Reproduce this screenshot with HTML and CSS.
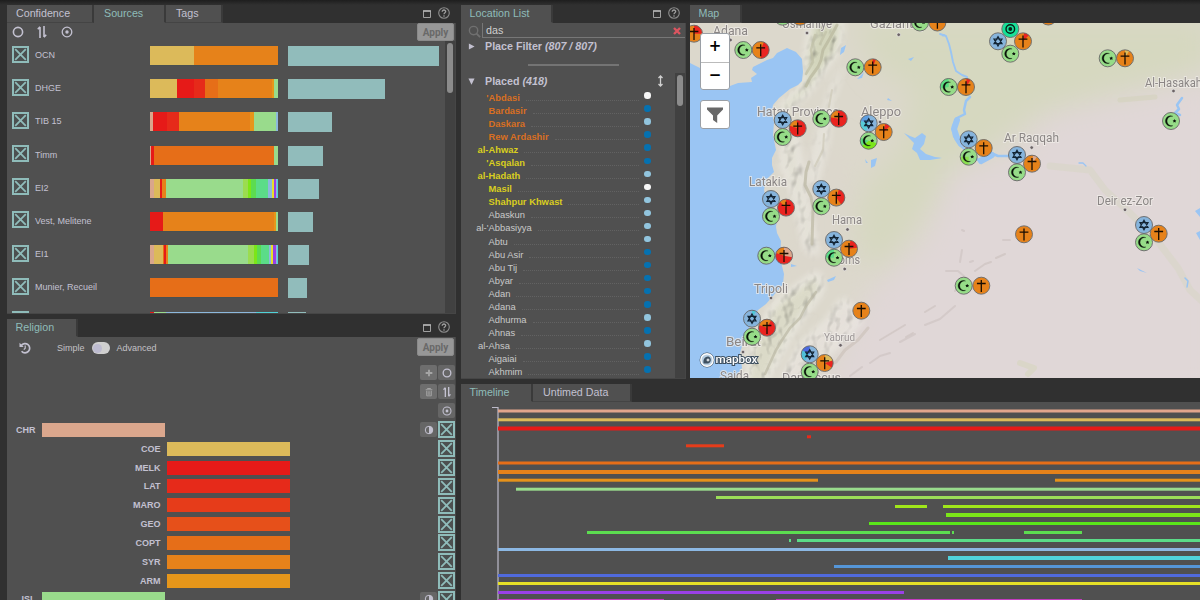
FILE: index.html
```html
<!DOCTYPE html>
<html lang="en">
<head>
<meta charset="utf-8">
<title>Places and religions</title>
<link rel="stylesheet" href="styles.css">
</head>
<body>
<svg class="defs" width="0" height="0" aria-hidden="true">
  <defs>
    <symbol id="i-check" viewBox="0 0 17 17"><rect x="1" y="1" width="15" height="15" fill="#4c5050" stroke="#8fbcba" stroke-width="2"/><path d="M3.200 3.200l10.600 10.600M13.800 3.200l-10.600 10.600" stroke="#8fbcba" stroke-width="1.800"/></symbol>
    <symbol id="i-circle" viewBox="0 0 12 12"><circle cx="6" cy="6" r="4.6" fill="none" stroke="currentColor" stroke-width="1.6"/></symbol>
    <symbol id="i-target" viewBox="0 0 12 12"><circle cx="6" cy="6" r="4.8" fill="none" stroke="currentColor" stroke-width="1.3"/><circle cx="6" cy="6" r="1.7" fill="currentColor"/></symbol>
    <symbol id="i-sort" viewBox="0 0 12 12"><path d="M4 12V1M1.8 3.2L4 .8M8 0v11M10.2 8.8L8 11.2" fill="none" stroke="currentColor" stroke-width="1.6"/></symbol>
    <symbol id="i-max" viewBox="0 0 8 8"><path d="M.5 1h7v6.500h-7z" fill="#303030" stroke="#a0a0a0"/><path d="M0 1h8" stroke="#b4b4b4" stroke-width="1.500"/></symbol>
    <symbol id="i-help" viewBox="0 0 12 12"><circle cx="6" cy="6" r="5.300" fill="none" stroke="#8c8c8c" stroke-width="1.100"/><path d="M4.200 4.700C4.200 2.400 7.800 2.500 7.700 4.600C7.700 5.800 6 5.700 6 7.200" fill="none" stroke="#a0a0a0" stroke-width="1.300"/><circle cx="6" cy="9" r=".8" fill="#a0a0a0"/></symbol>
    <symbol id="m-moon" viewBox="-9 -9 18 18"><path d="M1.800 -4.700A5.200 5.200 0 1 0 1.800 4.700A4.800 4.800 0 1 1 1.800 -4.700Z" fill="#0b130b" stroke="#0b130b" stroke-width=".3"/><path d="M3.500 -1.900L4.100 -.7L5.400 -.6L4.500 .3L4.800 1.600L3.500 1L2.300 1.600L2.500 .3L1.600 -.6L2.900 -.7Z" fill="#0b130b"/></symbol>
    <symbol id="m-cross" viewBox="-9 -9 18 18"><path d="M0 -5.800V6.200M-4.400 -2.200H4.400" fill="none" stroke="#180d02" stroke-width="1.300"/></symbol>
    <symbol id="m-star" viewBox="-9 -9 18 18"><path d="M0 -4.700L4 2.300H-4ZM0 4.700L4 -2.300H-4Z" fill="none" stroke="#122434" stroke-width="1.200"/></symbol>
    <symbol id="m-target" viewBox="-9 -9 18 18"><circle r="4.300" fill="none" stroke="#042417" stroke-width="1.400"/><circle r="1.900" fill="#042417"/></symbol>
  </defs>
</svg>
<div class="app">
  <div class="left">
    <section class="panel sources">
      <header class="tabbar">
        <span class="tab w-conf">Confidence</span><span class="tab active w-src">Sources</span><span class="tab w-tags">Tags</span>
        <span class="tools"><svg class="max"><use href="#i-max"/></svg><svg class="help"><use href="#i-help"/></svg></span>
      </header>
      <div class="body">
        <div class="toolbar">
          <svg class="ico"><use href="#i-circle"/></svg><svg class="ico"><use href="#i-sort"/></svg><svg class="ico"><use href="#i-target"/></svg>
          <button class="apply">Apply</button>
        </div>
        <div class="scroller">
          <div class="source-list" id="sources"></div>
          <div class="track"><div class="thumb tall"></div></div>
        </div>
      </div>
    </section>
    <section class="panel religion">
      <header class="tabbar">
        <span class="tab active w-rel">Religion</span>
        <span class="tools"><svg class="max"><use href="#i-max"/></svg><svg class="help"><use href="#i-help"/></svg></span>
      </header>
      <div class="body">
        <div class="rel-top">
          <svg class="history" viewBox="0 0 12 12"><path d="M2.300 3.600A4.600 4.600 0 1 1 2.600 9.200" fill="none" stroke="#c3c1d0" stroke-width="1.700"/><path d="M.5 .8V5H4.700Z" fill="#c3c1d0"/><path d="M6.200 3.500V6.300L4.800 7.600" fill="none" stroke="#c3c1d0" stroke-width="1.200"/></svg>
          <span class="lbl">Simple</span><span class="switch"></span><span class="lbl">Advanced</span>
          <button class="apply">Apply</button>
        </div>
        <div class="rel-tools">
          <div class="pair"><span class="btn dim"><svg viewBox="0 0 12 12"><path d="M6 2v8M2 6h8" stroke="#a5a5a5" stroke-width="2.200"/></svg></span><span class="btn"><svg><use href="#i-circle"/></svg></span></div>
          <div class="pair"><span class="btn dim"><svg viewBox="0 0 12 12"><path d="M2 3.200H10M4.500 2.500V1.700H7.500V2.500" stroke="#a5a5a5" stroke-width="1.300" fill="none"/><path d="M3.200 4.500V10.600H8.800V4.500M5 5V9.500M7 5V9.500" stroke="#a5a5a5" stroke-width="1.100" fill="none"/></svg></span><span class="btn"><svg><use href="#i-sort"/></svg></span></div>
          <div class="pair"><span class="btn"><svg><use href="#i-target"/></svg></span></div>
        </div>
        <div class="rel-list" id="religions"></div>
      </div>
    </section>
  </div>
  <div class="right">
    <div class="top">
      <section class="panel locations">
        <header class="tabbar">
          <span class="tab active w-loc">Location List</span>
          <span class="tools"><svg class="max"><use href="#i-max"/></svg><svg class="help"><use href="#i-help"/></svg></span>
        </header>
        <div class="body">
          <div class="search">
            <svg class="lens" viewBox="0 0 14 14"><circle cx="6" cy="6" r="4.500" fill="none" stroke="#707070" stroke-width="1.500"/><path d="M9.200 9.200L13 13" stroke="#707070" stroke-width="2"/></svg>
            <div class="field"><span>das</span><svg class="clear" viewBox="0 0 8 8"><path d="M1 1l6 6M7 1L1 7" stroke="#dc5560" stroke-width="2.400"/></svg></div>
          </div>
          <div class="head"><svg class="tri" viewBox="0 0 8 8"><path d="M1 .5L7.500 4L1 7.500Z" fill="#c3c1d0"/></svg>Place Filter&nbsp;<i>(807 / 807)</i></div>
          <div class="rule"></div>
          <div class="placed">
            <div class="placed-main">
              <div class="head second"><svg class="tri" viewBox="0 0 8 8"><path d="M.5 .5H7.500L4 7.800Z" fill="#c3c1d0"/></svg>Placed&nbsp;<i>(418)</i><svg class="updown" viewBox="0 0 6 12"><path d="M3 1.500V10.500M1 3L3 1L5 3M1 9L3 11L5 9" fill="none" stroke="#d0d0d0" stroke-width="1.300"/></svg></div>
              <div id="places"></div>
            </div>
            <div class="track"><div class="thumb short"></div></div>
          </div>
        </div>
      </section>
      <section class="panel mapbox">
        <header class="tabbar"><span class="tab active w-map">Map</span></header>
        <div class="map-body">
          <svg id="map" width="510" height="355" viewBox="690 23 510 355">
            <defs>
              <filter id="soft" x="-30%" y="-30%" width="160%" height="160%"><feGaussianBlur stdDeviation="14"/></filter>
              <filter id="hill" x="-20%" y="-20%" width="140%" height="140%" color-interpolation-filters="sRGB">
                <feGaussianBlur in="SourceGraphic" stdDeviation="4" result="s"/>
                <feTurbulence type="fractalNoise" baseFrequency=".09 .07" numOctaves="2" seed="7" result="n"/>
                <feColorMatrix in="n" values="0 0 0 0 0  0 0 0 0 0  0 0 0 0 0  1 0 0 0 0" result="h"/>
                <feDiffuseLighting in="h" surfaceScale="1.800" diffuseConstant="1.200" lighting-color="#fff" result="l"><feDistantLight azimuth="215" elevation="56"/></feDiffuseLighting>
                <feBlend in="s" in2="l" mode="multiply" result="b"/>
                <feComposite in="b" in2="s" operator="in"/>
              </filter>
            </defs>
            <rect x="690" y="23" width="510" height="355" fill="#dcd8cc"/>
            <g filter="url(#soft)">
              <path d="M850 20H1210V70L1120 92L1050 110L1010 130L960 175L925 215L880 270L855 250L862 190L900 150L915 90L880 70Z" fill="#d6d8c0"/>
              <path d="M1220 75L1130 95L1045 115L1020 150L950 170L925 240L870 290L850 330L820 400H1220Z" fill="#e0d7d7"/>
              <path d="M780 130L800 230L790 285L860 270L850 180L840 150Z" fill="#dcd7cc"/>
            </g>
            <g filter="url(#hill)">
              <path d="M812 20H842L838 50L822 72L808 92L780 116L782 105L804 85L806 55Z" fill="#d3d5bc"/>
              <path d="M784 118L797 140L806 200L818 255L806 250L796 200L782 165Z" fill="#dcd9ca" opacity=".8"/>
              <path d="M846 60L832 100L828 140L815 190L808 175L820 125L832 85Z" fill="#dfdccf" opacity=".55"/>
              <path d="M775 303L818 272L822 290L793 330L762 388H745L752 345Z" fill="#dbdac8"/>
              <path d="M843 298L862 320L835 348L810 368L795 388H778L800 345L828 320Z" fill="#e0dad1" opacity=".75"/>
            </g>
            <g fill="none" stroke-linecap="round" stroke-linejoin="round">
              <path d="M837 25L830 38L823 50L821 60L818 67L810 78L806 86" stroke="#b8b79d" stroke-width="3" opacity=".7"/>
              <path d="M815 35L811 50L813 62L806 74M826 32L820 44" stroke="#c0c1a6" stroke-width="2.500" opacity=".7"/>
              <path d="M809 162L806 172L805 185L811 197L813 208L812 244" stroke="#bebaa6" stroke-width="3" opacity=".75"/>
              <path d="M824 134L823 150L815 166M832 90L828 112" stroke="#cdc9b8" stroke-width="2" opacity=".7"/>
              <path d="M816 292L806 306L800 318L790 328L782 340L776 350L765 374" stroke="#b9b5a2" stroke-width="2.600" opacity=".65"/>
              <path d="M868 328L858 340L845 350L836 362L822 368" stroke="#c9bfb8" stroke-width="3" opacity=".6"/>
              <path d="M880 340L905 325M925 312L935 306M975 271L985 264L991 262M996 258L1005 254M906 337L913 333M955 291L962 284" stroke="#cdc3c1" stroke-width="2" opacity=".7"/>
              <path d="M850 376L862 367M870 363L880 356L890 353M900 342L915 334M925 325L940 319L955 306" stroke="#cfc5c3" stroke-width="2" opacity=".7"/>
              <path d="M946 271H958L965 277M960 262L962 250M970 262L973 261M1003 240L1010 240M962 230L964 231" stroke="#cbc1bf" stroke-width="2" opacity=".6"/>
              <path d="M1050 166L1090 170L1105 190L1130 213L1155 238L1178 268L1190 290L1205 304" stroke="#dad6c9" stroke-width="7" opacity=".75"/>
              <path d="M1120 100L1155 97" stroke="#d3d2bd" stroke-width="5" opacity=".6"/>
              <path d="M1020 363L1034 368L1028 374" stroke="#dad6c8" stroke-width="6"/>
            </g>
            <path d="M690 63L700 68L712 75L730 86L738 83L752 82L751 78L757 74L752 70L753 67L767 60L773 58L777 53L787 48L796 52L802 59L803 72L802 81L798 85L790 89L779 98L773 105L772 112L774 123L773 135L776 150L772 158L772 165L774 172L766 180L764 190L768 205L777 220L776 227L777 233L781 241L780 258L784 274L783 284L773 296L766 304L758 310L748 330L743 343L740 353L742 368L735 378H690Z" fill="#9ac5f3"/>
            <g fill="none" stroke="#9ac5f3" stroke-linecap="round" stroke-linejoin="round">
              <path d="M940 34L946 36L949 44L951 52L953 62L956 71L962 75L967 77L968 87" stroke-width="1.900"/>
              <path d="M970 97L966 101L964 110L965 114L957 118L953 126L954 136L960 145L968 152L978 160L985 157L991 153L998 156H1010" stroke-width="2.500"/>
              <path d="M957 120L954 129L957 138L961 144M981 161L992 155" stroke-width="6"/>
              <path d="M1182 98L1177 105L1179 109L1175 113L1180 115" stroke-width="2.500"/>
              <path d="M1079 163L1083 163L1086 166" stroke-width="1.300"/><path d="M1185 278L1188 281L1187 287" stroke-width="1.500"/>
            </g>
            <g fill="#9ac5f3">
              <path d="M904 133L910 136L915 138L922 133L926 136L924 144L920 149L926 154L935 157L942 158L930 160L920 160L917 153L912 149L914 143Z"/>
              <path d="M841 48L846 45L844 52L840 55ZM908 59L914 57L911 61ZM888 98L892 101L887 100ZM871 160L877 158L875 166L871 168ZM865 159L868 163L866 163ZM827 280L836 276L834 280L828 282ZM1137 268L1147 273L1140 271ZM791 264L797 266L791 267ZM1195 211L1200 208V217ZM1196 233L1200 231V240ZM857 79L864 72L862 78ZM941 34H945L943 37Z"/>
            </g>
            <g id="labels"></g>
            <g id="markers"></g>
            <g class="brand">
              <circle cx="707" cy="360" r="6.200" fill="#fff" stroke="#3e5060" stroke-width="2.400"/><circle cx="707" cy="360" r="6.200" fill="#b9cfe2" stroke="#fff" stroke-width="1.400"/>
              <path d="M703.600 363.400C702.600 360 705 356 708.500 356.600C712 358 711.300 363 708 363.500Z" fill="#3e5060"/><path d="M708 358L708.700 359.500L710.200 360L708.700 360.600L708 362L707.300 360.600L705.800 360L707.300 359.500Z" fill="#fff"/>
              <text x="715.500" y="363.300" textLength="42" lengthAdjust="spacingAndGlyphs">mapbox</text>
            </g>
          </svg>
          <div class="map-ctrl">
            <div class="zoom"><span>+</span><span>−</span></div>
            <div class="filter"><svg viewBox="0 0 16 16"><path d="M0 .5H16V2.500L10.200 8.500V16L6 13V8.500L0 2.500Z" fill="#686868"/></svg></div>
          </div>
        </div>
      </section>
    </div>
    <section class="panel timeline">
      <header class="tabbar"><span class="tab active w-time">Timeline</span><span class="tab w-unt">Untimed Data</span></header>
      <div class="body"><svg id="chart" width="739" height="198" viewBox="461 402 739 198"><path d="M492 407.500H498V600" fill="none" stroke="#bdbbca" stroke-width="1.200"/></svg></div>
    </section>
  </div>
</div>
<script src="script.js"></script>
</body>
</html>
```
FILE: styles.css
```css
* { box-sizing: border-box; }
body { margin: 0; width: 1200px; height: 600px; overflow: hidden; background: #303030; color: #c3c1d0; font-family: "Liberation Sans", Arial, sans-serif; font-size: 9px; }
.defs { position: absolute; }
svg { display: block; flex: none; }
.app { display: flex; gap: 5px; height: 600px; padding: 5px 0 0 7px; background: linear-gradient(#1e1e1e, #303030 5px); overflow: hidden; }
.left { width: 449px; display: flex; flex-direction: column; gap: 5px; flex: none; }
.right { width: 739px; display: flex; flex-direction: column; gap: 5px; flex: none; }
.top { display: flex; gap: 4px; height: 374px; flex: none; }
.panel { display: flex; flex-direction: column; min-height: 0; }
.sources { height: 309px; flex: none; }
.religion, .timeline { flex: 1; }
.locations { width: 225px; flex: none; }
.mapbox { width: 510px; flex: none; }
.body { flex: 1; min-height: 0; background: #505050; border: solid #464646; border-width: 0 1px 1px 0; overflow: hidden; }
.timeline .body { border-width: 0; }
.religion .body { border-bottom-width: 0; }

.tabbar { display: flex; height: 18px; flex: none; align-items: stretch; background: #303030; }
.tab { font-size: 10.700px; line-height: 17px; padding-left: 9px; background: #505050; border-right: 2px solid #3a3a3a; border-bottom: 1px solid #444; white-space: nowrap; }
.tab.active { color: #8fbcb9; border-bottom-color: #505050; padding-left: 8.500px; }
.w-conf { width: 87px; } .tab.w-src { width: 72px; padding-left: 10px; } .w-tags { width: 57px; padding-left: 10px; }
.w-rel { width: 71px; } .w-loc { width: 92px; } .w-map { width: 52px; } .w-time { width: 72px; } .w-unt { width: 99px; padding-left: 10px; }
.tools { margin-left: auto; display: flex; align-items: center; gap: 7px; padding-right: 6px; padding-bottom: 3px; }
.max { width: 8px; height: 8px; margin-top: 2px; } .help { width: 12px; height: 12px; }

.apply { margin: 0 0 0 auto; width: 37px; height: 18px; padding: 0; border: 1px solid #8a8a8a; border-radius: 2px; background: #979797; color: #696969; font: 700 10px Roboto, sans-serif; }
.toolbar { display: flex; align-items: center; height: 18px; padding: 0 1px 0 5px; gap: 12px; }
.toolbar .ico:nth-child(3) { margin-left: 1px; }
.ico { width: 12px; height: 12px; }
.scroller { display: flex; height: 272px; }
.source-list { flex: 1; padding-top: 4px; }
.track { width: 10px; flex: none; background: #414141; padding: 2px; }
.thumb { background: #8c8c8c; border-radius: 3px; width: 6px; }
.tall { height: 50px; } .short { height: 31px; }
.source { display: grid; grid-template-columns: 17px 6px 115px 128px 10px 1fr; height: 33.200px; padding-left: 5px; align-items: start; }
.source .chk { width: 17px; height: 17px; margin-top: .5px; }
.source .name { grid-column: 3; padding-top: 5px; line-height: 10px; }
.bar { display: flex; grid-column: 4; height: 20px; margin-top: 1px; border-bottom: 1px solid rgba(60,80,80,.35); overflow: hidden; }
.bar span { flex: none; height: 20px; }
.count { grid-column: 6; height: 20px; margin-top: 1px; background: #91bcbb; }

.rel-top { display: flex; align-items: center; height: 18px; margin-top: 1px; padding: 0 1px 0 12px; }
.history { width: 12px; height: 12px; margin-right: 26px; margin-top: 1px; }
.lbl { color: #c3c1c6; padding-top: 2px; }
.rel-top .lbl:last-of-type { width: 60px; }
.switch { width: 18px; height: 12px; margin: 2px 7px 0; background: #cfcfcf; border-radius: 6px; display: flex; align-items: center; padding-left: 1px; }
.switch::before { content: ""; width: 9px; height: 9px; border-radius: 50%; background: #bdbbd0; }
.rel-tools { display: flex; flex-direction: column; gap: 4px; padding-top: 9px; }
.pair { display: flex; justify-content: flex-end; gap: 1px; }
.btn { width: 17px; height: 15px; background: #666; border-radius: 2px; display: flex; align-items: center; justify-content: center; flex: none; }
.btn svg { width: 10px; height: 10px; } .btn.dim { background: #6e6e6e; }
.rel-list { padding-top: 2.400px; }
.rel-row { display: flex; align-items: center; height: 18.850px; font-weight: bold; }
.rel-row .code { width: 28.500px; text-align: right; margin-right: 6.500px; }
.rel-row.child .code { width: 153.500px; }
.rel-row .swatch { width: 123px; height: 14px; }
.rel-row .ctl { margin-left: auto; display: flex; gap: 1px; align-items: center; }
.rel-row .chk { width: 17px; height: 17px; }

.search { display: flex; height: 15px; }
.lens { width: 13px; height: 13px; margin: 2px 1px 0 7px; }
.field { flex: 1; display: flex; align-items: center; justify-content: space-between; padding: 0 4px 0 3px; border: 1px solid #777; border-width: 0 0 1px 1px; background: #505050; font-size: 10.700px; color: #cfcfcf; }
.clear { width: 8px; height: 8px; margin-top: 2px; }
.head { display: flex; align-items: center; height: 16px; padding-left: 7px; font-size: 10.700px; font-weight: bold; }
.tri { width: 7px; height: 7px; margin-right: 10px; }
.rule { width: 91px; height: 2px; margin: 10px 0 7px 67px; background: #747474; }
.placed { display: flex; height: 306px; }
.placed-main { flex: 1; }
.second { height: 18px; padding-bottom: 2px; }
.updown { width: 7px; height: 12px; margin: 0 11px 0 auto; }
.place { display: flex; align-items: center; height: 13.050px; font-size: 9.400px; color: #c9c9c9; }
.place .pre { width: 27.500px; text-align: right; flex: none; }
.place .dots { flex: 1; margin: 6px 5px 0 6px; border-bottom: 1px dotted #626262; }
.place .dot { width: 6.500px; height: 6.500px; border-radius: 50%; margin: -4px 24.500px 0 0; flex: none; }
.place.hit { color: #d96f22; font-weight: bold; }
.place.near { color: #d9ce1e; font-weight: bold; }

.map-body { display: grid; height: 355px; }
.map-body > * { grid-area: 1 / 1; }
.map-ctrl { padding: 10px 0 0 10px; width: 40px; z-index: 1; }
.zoom { width: 30px; height: 57px; background: #fff; border: 1px solid #9a9fa5; border-radius: 3px; font: bold 15px/25px "DejaVu Sans", sans-serif; color: #000; text-align: center; }
.zoom span { display: block; height: 28px; } .zoom span + span { border-top: 1px solid #bbb; }
.filter { width: 30px; height: 29px; margin-top: 10px; background: #fff; border: 1px solid #9a9fa5; border-radius: 3px; display: grid; place-items: center; }
.filter svg { width: 16px; height: 16px; }
.map-label { font-family: Roboto, sans-serif; font-size: 13px; fill: #8b8685; stroke: #f1eeea; stroke-opacity: .7; stroke-width: 2px; paint-order: stroke; }
.map-label.small { font-size: 10.500px; fill: #9a9494; }
.brand text { font: 500 11px Roboto, sans-serif; fill: #fff; stroke: #3e5060; stroke-width: 2px; paint-order: stroke; }
```
FILE: script.js
```js
const NS = 'http://www.w3.org/2000/svg';
const C = { sal: '#d9a68c', gold: '#dcba5a', red: '#e61a18', r2: '#e62a1a', or: '#e66e18', o2: '#e6821a', o3: '#e6961a', gr: '#99db8c', yg: '#9bdc50', lime: '#7ce618', g2: '#5cdc50', teal: '#5bdc88', bl: '#8cb8dc', ye: '#e6e028', pu: '#9a40e6', cy: '#50d2d8' };
const use = (id, cls = '') => `<svg class="${cls}"><use href="#${id}"/></svg>`;

const sources = [
  ['OCN', 151, 'gold 44 o2 84'],
  ['DHGE', 97, 'gold 27 red 17 r2 11 or 13 o2 54 o3 2 gr 4'],
  ['TIB 15', 44, 'sal 3 red 14 r2 12 o2 71 o3 4 gr 22 bl 2'],
  ['Timm', 35, 'sal 1 red 3 or 120 gr 4'],
  ['EI2', 31, 'sal 4 gold 6 red 2 o2 4 gr 77 yg 5 lime 3 g2 5 teal 12 bl 4 ye 2 pu 2 bl 1 cy 1'],
  ['Vest, Melitene', 25, 'red 13 o2 111 o3 2 gr 2'],
  ['EI1', 21, 'sal 4 gold 9 or 1 red 2 o2 2 gr 80 yg 6 lime 3 g2 4 teal 8 bl 2 ye 2 pu 3 bl 1 cy 1'],
  ['Munier, Recueil', 19, 'or 128'],
  ['', 18, 'red 4 gr 12 bl 90 cy 22']
];
document.getElementById('sources').innerHTML = sources.map(([name, n, seg]) => {
  const p = seg.split(' ');
  let s = '';
  for (let i = 0; i < p.length; i += 2) s += `<span style="width:${p[i + 1]}px;background:${C[p[i]]}"></span>`;
  return `<div class="source">${use('i-check', 'chk')}<span class="name">${name}</span><div class="bar">${s}</div><div class="count" style="width:${n}px"></div></div>`;
}).join('');

const religions = [['CHR', '#dba78d', 0], ['COE', '#dcba5a', 1], ['MELK', '#e61a18', 1], ['LAT', '#e62a1a', 1], ['MARO', '#e63c1a', 1], ['GEO', '#e6501a', 1], ['COPT', '#e66e18', 1], ['SYR', '#e6821a', 1], ['ARM', '#e6961a', 1], ['ISL', '#99db8c', 0]];
const half = '<span class="btn"><svg viewBox="0 0 12 12"><circle cx="6" cy="6" r="4.5" fill="none" stroke="#c3c1d0" stroke-width="1.2"/><path d="M6 1.500A4.500 4.500 0 0 1 6 10.500Z" fill="#c3c1d0"/></svg></span>';
document.getElementById('religions').innerHTML = religions.map(([c, col, child]) =>
  `<div class="rel-row ${child ? 'child' : ''}"><span class="code">${c}</span><span class="swatch" style="background:${col}"></span><span class="ctl">${child ? '' : half}${use('i-check', 'chk')}</span></div>`).join('');

const D = { w: '#f7f7f7', d: '#0571b0', l: '#92c5de' };
const places = [["'", 'Abdasi', 'w', 'hit'], ['', 'Bardasir', 'd', 'hit'], ['', 'Daskara', 'l', 'hit'], ['', 'Rew Ardashir', 'd', 'hit'], ['al-', 'Ahwaz', 'd', 'near'], ["'", 'Asqalan', 'd', 'near'], ['al-', 'Hadath', 'l', 'near'], ['', 'Masil', 'w', 'near'], ['', 'Shahpur Khwast', 'l', 'near'], ['', 'Abaskun', 'l'], ["al-'", 'Abbasiyya', 'l'], ['', 'Abtu', 'l'], ['', 'Abu Asir', 'd'], ['', 'Abu Tij', 'd'], ['', 'Abyar', 'd'], ['', 'Adan', 'd'], ['', 'Adana', 'd'], ['', 'Adhurma', 'l'], ['', 'Ahnas', 'd'], ['al-', 'Ahsa', 'l'], ['', 'Aigaiai', 'd'], ['', 'Akhmim', 'd']];
document.getElementById('places').innerHTML = places.map(([pre, n, d, k]) =>
  `<div class="place ${k || ''}"><span class="pre">${pre}</span><span>${n}</span><span class="dots"></span><span class="dot" style="background:${D[d]}"></span></div>`).join('');

const labels = [['Adana', 713, 748, 34.5], ['Osmaniye', 782, 832, 28], ['Gaziantep', 870, 927, 28], ['Hatay Province', 757, 839, 116], ['Aleppo', 861, 901, 116], ['Latakia', 749, 787, 185.5], ['Hama', 832, 862, 224], ['Homs', 831, 860, 264], ['Tripoli', 754, 788, 293], ['Beirut', 726, 761, 346], ['Saida', 720, 749, 380], ['Damascus', 782, 841, 382], ['Yabrud', 824, 855, 341, 'small'], ['Ar Raqqah', 1004, 1059, 142], ['Al-Hasakah', 1145, 1202, 86.5], ['Deir ez-Zor', 1097, 1153, 205]];
const dots = [[730.5, 40], [807, 33], [898.7, 34.7], [880, 122], [1031.7, 147.6], [1173.5, 91], [1125, 209.8], [847.5, 229.5], [844.7, 269], [771, 298], [840.5, 345.3], [743, 352]];
document.getElementById('labels').innerHTML =
  dots.map(([x, y]) => `<circle cx="${x}" cy="${y}" r="1.800" fill="#6c6365" stroke="#eee" stroke-width=".6"/>`).join('') +
  labels.map(([t, a, b, y, k]) => `<text class="map-label ${k || ''}" x="${a}" y="${y}" textLength="${b - a}" lengthAdjust="spacingAndGlyphs">${t}</text>`).join('');

// Each marker: x, y, kind, base colour, then pie slices as [from, to, colour] in turns.
const R = '#ea2420', O = '#e6821a', G = '#96dc88', B = '#86b4dc';
const markers = [
  [694, 33.7, 'cross', O, [0, .25, R]], [743.3, 50, 'moon', G], [760.7, 50, 'cross', O, [.06, .5, R]],
  [782.7, 16.7, 'moon', G], [800, 16.7, 'cross', O], [920, 22.5, 'moon', G], [937.4, 22.5, 'cross', O],
  [855.3, 67.3, 'moon', G], [872.7, 67.3, 'cross', O, [0, .06, R]],
  [782.7, 120, 'star', B], [797.7, 128.3, 'cross', R, [.8, .98, O]], [782.7, 137, 'moon', G],
  [821.3, 118.7, 'moon', G], [838.7, 118.7, 'cross', R, [.78, .98, O]],
  [868.7, 123.3, 'star', B, [.55, .8, '#58cbd8'], [.8, 1, '#5d9de0']], [883.7, 132, 'cross', O, [.03, .13, R]], [868.7, 140.7, 'moon', G, [.3, .65, '#7be61a'], [.65, .8, '#5cdc80']],
  [771, 199, 'star', B], [786, 207.6, 'cross', R, [.87, 1, O]], [771, 216.3, 'moon', G],
  [821.3, 189, 'star', B], [836.3, 197.6, 'cross', O, [.05, .4, R]], [821.3, 206.3, 'moon', G],
  [766.3, 255.7, 'moon', G], [784, 255.7, 'cross', R, [0, .28, '#dba78d'], [.8, 1, O]],
  [834, 240, 'star', B], [849, 248.7, 'cross', O, [.03, .23, R]], [834, 257.7, 'moon', G, [.75, 1, '#5cdc88']],
  [861.3, 310.7, 'cross', O], [752, 318.7, 'star', B, [0, .08, '#50c8d8']], [767, 327.7, 'cross', R, [.8, 1.08, O]], [752, 336.7, 'moon', G],
  [809.7, 354.3, 'star', B, [.6, .83, '#50c0d8'], [.83, 1, '#4c6ae0']], [824.7, 363, 'cross', O, [.01, .2, '#dcba5a'], [.2, .34, R]], [809.7, 371.7, 'moon', G],
  [1010.3, 29, 'target', '#18e098'], [998, 41.3, 'star', B], [1023, 41.3, 'cross', O, [.02, .12, R]], [1010.3, 53.7, 'moon', G],
  [1048.3, 16.5, 'cross', O], [1107.7, 58.3, 'moon', G], [1125, 58.3, 'cross', O, [0, .08, '#dcba5a']],
  [948.7, 87, 'moon', G, [.72, 1, '#5cdc80']], [966, 87, 'cross', O, [.01, .09, R]], [1171, 121, 'moon', G],
  [968.7, 139.3, 'star', B], [983.7, 148, 'cross', O], [968.7, 156.7, 'moon', G, [.5, .75, '#8be050']],
  [1017, 155, 'star', B], [1032, 163.7, 'cross', O, [.02, .1, '#dba78d']], [1017, 172.3, 'moon', G],
  [1024, 234.3, 'cross', O], [963.7, 285.7, 'moon', G], [981.3, 285.7, 'cross', O],
  [1144, 225, 'star', B], [1158.7, 233.7, 'cross', O], [1144, 242.3, 'moon', G]
];
const pt = t => `${(8.4 * Math.sin(t * 2 * Math.PI)).toFixed(2)} ${(-8.4 * Math.cos(t * 2 * Math.PI)).toFixed(2)}`;
document.getElementById('markers').innerHTML = markers.map(([x, y, k, c, ...sl]) =>
  `<g transform="translate(${x} ${y})"><circle r="8.400" fill="${c}"/>` +
  sl.map(([a, b, f]) => `<path d="M0 0L${pt(a)}A8.400 8.400 0 ${b - a > .5 ? 1 : 0} 1 ${pt(b)}Z" fill="${f}"/>`).join('') +
  `<circle r="8.500" fill="none" stroke="#666" stroke-width=".9"/><use href="#m-${k}" x="-9" y="-9" width="18" height="18"/></g>`).join('');

const rows = [
  [409.5, '#e3a68c', [498, 1200]], [418.3, '#dcba5a', [498, 1200]], [426.500, '#e61a18', [498, 1200]], [435.3, '#e62a1a', [807, 811]],
  [444.3, '#e63c1a', [686, 724]], [461.5, '#e66e18', [498, 1200]], [470, '#e6821a', [498, 1200]], [478.7, '#e6921a', [498, 818], [1055, 1200]],
  [487.7, '#99db8c', [516, 1200]], [496, '#9bdc58', [716, 1200]], [505, '#a0e61a', [895, 927], [943, 1200]], [513, '#7ce618', [946, 1200]],
  [522, '#5ae61a', [869, 1200]], [531, '#5cdc50', [587, 950], [952, 954], [1024, 1082]], [539, '#5bdc88', [789, 791], [797, 1200]],
  [548, '#8cb8e4', [498, 1200]], [556, '#50d2dc', [948, 1200]], [565, '#5596d8', [834, 1200]], [574, '#506adc', [498, 1200]],
  [582, '#e6e028', [498, 1200]], [591, '#9a40e6', [498, 904]], [599, '#c43cc0', [498, 664], [776, 1082]]
];
const thick = [426.5, 470, 513, 556];
const chart = document.getElementById('chart');
for (const [y, fill, ...spans] of rows) for (const [a, b] of spans) {
  const r = document.createElementNS(NS, 'rect');
  r.setAttribute('x', a); r.setAttribute('y', y);
  r.setAttribute('width', b - a); r.setAttribute('height', thick.includes(y) ? 4 : 3);
  r.setAttribute('fill', fill);
  chart.append(r);
}
```
